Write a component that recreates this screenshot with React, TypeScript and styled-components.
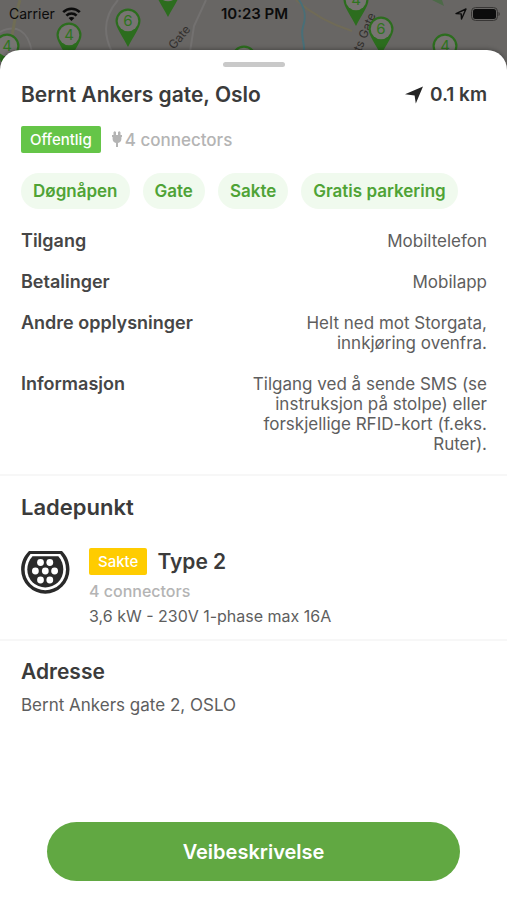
import React from "react";
import styled, { createGlobalStyle } from "styled-components";

const GlobalStyle = createGlobalStyle`
  * { box-sizing: border-box; }
  body {
    margin: 0;
    background: #ffffff;
    color: #3b3b3b;
    font-family: Inter, "Liberation Sans", sans-serif;
  }
  h1, h2, h3, p, dl, dt, dd, ul { margin: 0; padding: 0; }
`;

const Screen = styled.div`
  position: relative;
  display: flex;
  flex-direction: column;
  min-height: 100vh;
`;

const MapBackdrop = styled.svg`
  position: absolute;
  top: 0;
  left: 0;
  width: 100%;
  height: 76px;
  background: #686664;
`;

const StatusBar = styled.header`
  position: relative;
  display: grid;
  grid-template-columns: 1fr auto 1fr;
  align-items: center;
  height: 50px;
  padding: 4px 7px 26px 9px;
  color: #0c0c0c;
  font-size: 14px;
  line-height: 20px;
`;

const StatusGroup = styled.div<{ $end?: boolean }>`
  display: flex;
  align-items: center;
  gap: ${(p) => (p.$end ? "4px" : "7px")};
  justify-content: ${(p) => (p.$end ? "flex-end" : "flex-start")};
`;

const Clock = styled.time`
  font-size: 15px;
  font-weight: 600;
`;

const Sheet = styled.main`
  position: relative;
  flex: 1;
  display: flex;
  flex-direction: column;
  background: #ffffff;
  border-radius: 20px 20px 0 0;
  box-shadow: 0 -1px 4px rgba(0, 0, 0, 0.3);
`;

const Handle = styled.div`
  align-self: center;
  width: 62px;
  height: 5px;
  margin-top: 12px;
  border-radius: 3px;
  background: #c9c9c9;
`;

const Section = styled.section<{ $divided?: boolean }>`
  padding: 0 20px 0 21px;
  border-top: ${(p) => (p.$divided ? "2px solid #f7f7f7" : "none")};
`;

const TitleRow = styled.div`
  display: flex;
  align-items: center;
  justify-content: space-between;
  padding-top: 15px;
`;

const Title = styled.h1`
  font-size: 21px;
  line-height: 26px;
  font-weight: 600;
`;

const Distance = styled.span`
  display: flex;
  align-items: center;
  gap: 7px;
  font-size: 19px;
  line-height: 24px;
  font-weight: 600;
`;

const MetaRow = styled.div`
  display: flex;
  align-items: center;
  gap: 11px;
  margin-top: 18px;
`;

const Badge = styled.span<{ $color: string }>`
  padding: 0 9px;
  border-radius: 2px;
  background: ${(p) => p.$color};
  color: #ffffff;
  font-size: 15px;
  line-height: 27px;
  font-weight: 500;
`;

const Connectors = styled.p`
  display: flex;
  align-items: center;
  gap: 3px;
  color: #b4b4b4;
  font-size: 17px;
  line-height: 22px;
  font-weight: 500;
`;

const ChipList = styled.ul`
  display: flex;
  flex-wrap: wrap;
  gap: 13px;
  margin-top: 20px;
  list-style: none;
`;

const Chip = styled.li`
  padding: 0 12px;
  border-radius: 18px;
  background: #f0faee;
  color: #4fa336;
  font-size: 17px;
  line-height: 36px;
  font-weight: 600;
`;

const Facts = styled.dl`
  display: flex;
  flex-direction: column;
  gap: 21px;
  padding: 22px 0 20px;
`;

const Fact = styled.div`
  display: flex;
  justify-content: space-between;
  gap: 32px;
  line-height: 20px;
`;

const FactName = styled.dt`
  flex: none;
  color: #464646;
  font-size: 18px;
  font-weight: 600;
`;

const FactValue = styled.dd`
  max-width: 244px;
  color: #5e5e5e;
  font-size: 17px;
  text-align: right;
`;

const Heading = styled.h2<{ $minor?: boolean }>`
  font-size: ${(p) => (p.$minor ? "21px" : "22px")};
  line-height: 26px;
  font-weight: 600;
  padding-top: 18px;
`;

const Outlet = styled.div`
  display: flex;
  align-items: flex-start;
  gap: 19px;
  padding: 28px 0 12px;
`;

const OutletArt = styled.svg`
  flex: none;
  width: 49px;
  height: 43px;
  margin-top: 3px;
`;

const OutletInfo = styled.div`
  display: flex;
  flex-direction: column;
`;

const OutletTitle = styled.div`
  display: flex;
  align-items: center;
  gap: 10px;
  margin-bottom: 5px;
`;

const OutletName = styled.h3`
  font-size: 21px;
  line-height: 26px;
  font-weight: 600;
`;

const Muted = styled.p`
  color: #b4b4b4;
  font-size: 16px;
  line-height: 22px;
  font-weight: 500;
`;

const Detail = styled.p`
  margin-top: 3px;
  color: #5e5e5e;
  font-size: 16px;
  line-height: 22px;
`;

const Address = styled.p`
  margin-top: 9px;
  color: #5e5e5e;
  font-size: 17px;
  line-height: 22px;
`;

const Footer = styled.footer`
  display: flex;
  margin-top: auto;
  padding: 24px 47px 19px;
`;

const DirectionsButton = styled.button`
  flex: 1;
  height: 59px;
  border: 0;
  border-radius: 30px;
  background: #61a842;
  color: #ffffff;
  font-family: inherit;
  font-size: 20px;
  font-weight: 600;
  cursor: pointer;
`;

type PinProps = { x: number; y: number; label?: string };

const Pin = ({ x, y, label }: PinProps) => (
  <g transform={`translate(${x} ${y})`}>
    <path d="M-12.5 0 A12.5 12.5 0 1 1 12.5 0 C12.5 6 5 16 0 26 C-5 16 -12.5 6 -12.5 0Z" fill="#2c6d1e" />
    <circle r="10.3" fill="#777472" />
    {label && (
      <text y="5" textAnchor="middle" fontSize="15" fill="#2f7420">
        {label}
      </text>
    )}
  </g>
);

const CityMap = () => (
  <MapBackdrop viewBox="0 0 507 76" preserveAspectRatio="xMidYMin slice" aria-hidden="true">
    <g fill="none" stroke="#737170" strokeWidth="2">
      <path d="M118 0 C102 18 104 36 112 52" />
      <path d="M206 0 L194 26 L190 52" />
      <path d="M0 32 C16 24 28 30 32 52" />
    </g>
    <path d="M20 0 C14 18 12 34 10 52" fill="none" stroke="#706d55" strokeWidth="3" />
    <path d="M296 0 C312 14 330 24 352 31" fill="none" stroke="#706b57" strokeWidth="2" />
    <path d="M299 0 C306 10 306 18 303 27 C300 36 305 42 304 52" fill="none" stroke="#486f78" strokeWidth="2" />
    <path d="M432 0 L444 6 L442 0Z" fill="#4d6a48" />
    <g fill="#33302e" fontSize="12">
      <text transform="translate(174 50) rotate(-50)">Gate</text>
      <text transform="translate(361 52) rotate(-68)">ts Gate</text>
    </g>
    <Pin x={7} y={46} label="4" />
    <Pin x={69} y={35} label="4" />
    <Pin x={128} y={21} label="6" />
    <Pin x={168} y={-9} />
    <Pin x={244} y={58} />
    <Pin x={356} y={0} label="4" />
    <Pin x={381} y={29} label="6" />
    <Pin x={445} y={46} label="4" />
  </MapBackdrop>
);

const WifiIcon = () => (
  <svg width="19" height="14" viewBox="0 0 19 14" aria-hidden="true">
    <g fill="none" stroke="#0c0c0c" strokeWidth="2.6">
      <path d="M1.2 5.2 C5.8 0.6 13.2 0.6 17.8 5.2" />
      <path d="M4.4 8.6 C7.2 5.8 11.8 5.8 14.6 8.6" />
    </g>
    <path d="M9.5 14 L6.6 11 C8.2 9.6 10.8 9.6 12.4 11Z" fill="#0c0c0c" />
  </svg>
);

const LocationIcon = () => (
  <svg width="12" height="12" viewBox="0 0 12 12" aria-hidden="true">
    <path d="M1 5.6 L11 1 L6.5 11 L6.2 5.9Z" fill="none" stroke="#0c0c0c" strokeWidth="1.4" strokeLinejoin="round" />
  </svg>
);

const BatteryIcon = () => (
  <svg width="29" height="14" viewBox="0 0 29 14" aria-hidden="true">
    <rect x="0.5" y="0.5" width="26" height="13" rx="4" fill="none" stroke="#383635" />
    <rect x="2" y="2" width="23" height="10" rx="2.5" fill="#0c0c0c" />
    <path d="M27.5 5 C29.2 5.6 29.2 8.4 27.5 9Z" fill="#383635" />
  </svg>
);

const ArrowIcon = () => (
  <svg width="18" height="18" viewBox="0 0 18 18" aria-hidden="true">
    <path d="M0 8.3 L18 0.5 L10.8 17.5 L9.6 9.6Z" fill="#232323" />
  </svg>
);

const PlugIcon = () => (
  <svg width="10" height="17" viewBox="0 0 10 17" aria-hidden="true">
    <path
      d="M1.5 1.2 Q2.8 -0.6 4 1.2 V4 H6 V1.2 Q7.2 -0.6 8.5 1.2 V4 H10 V6 H9.4 V8 C9.4 10.2 7.8 11.6 6 11.9 V16 H4 V11.9 C2.2 11.6 0.6 10.2 0.6 8 V6 H0 V4 H1.5Z"
      fill="#b4b4b4"
    />
  </svg>
);

const holes = [
  [19.5, 11.5], [28.8, 11.5],
  [14.4, 20], [24.3, 20], [33.6, 20],
  [19.5, 29], [28.8, 29],
];

const Type2Icon = () => (
  <OutletArt viewBox="0 0 49 43" aria-hidden="true">
    <path d="M8 0 H41 C46 5 48.5 11 48.5 18.5 A24.2 24.2 0 0 1 0.1 18.5 C0.1 11 3 5 8 0Z" fill="#2a2a2a" />
    <path d="M9.5 3 H39.3 C43 7.5 45 12.8 45 18.5 A20.7 20.7 0 0 1 3.6 18.5 C3.6 12.8 5.8 7.5 9.5 3Z" fill="#ffffff" />
    <path d="M11.5 5.2 H37.3 C40.8 9 42.3 13.6 42.3 18.5 A18 18 0 0 1 6.3 18.5 C6.3 13.6 8 9 11.5 5.2Z" fill="#2a2a2a" />
    {holes.map(([cx, cy]) => (
      <circle key={`${cx}-${cy}`} cx={cx} cy={cy} r="3.4" fill="#ffffff" />
    ))}
  </OutletArt>
);

const tags = ["Døgnåpen", "Gate", "Sakte", "Gratis parkering"];

const facts = [
  { name: "Tilgang", value: "Mobiltelefon" },
  { name: "Betalinger", value: "Mobilapp" },
  { name: "Andre opplysninger", value: "Helt ned mot Storgata, innkjøring ovenfra." },
  {
    name: "Informasjon",
    value: "Tilgang ved å sende SMS (se instruksjon på stolpe) eller forskjellige RFID-kort (f.eks. Ruter).",
  },
];

export default function App() {
  return (
    <Screen>
      <GlobalStyle />
      <CityMap />
      <StatusBar>
        <StatusGroup>
          Carrier
          <WifiIcon />
        </StatusGroup>
        <Clock>10:23 PM</Clock>
        <StatusGroup $end>
          <LocationIcon />
          <BatteryIcon />
        </StatusGroup>
      </StatusBar>
      <Sheet>
        <Handle />
        <Section>
          <TitleRow>
            <Title>Bernt Ankers gate, Oslo</Title>
            <Distance>
              <ArrowIcon />
              0.1 km
            </Distance>
          </TitleRow>
          <MetaRow>
            <Badge $color="#65c548">Offentlig</Badge>
            <Connectors>
              <PlugIcon />4 connectors
            </Connectors>
          </MetaRow>
          <ChipList>
            {tags.map((tag) => (
              <Chip key={tag}>{tag}</Chip>
            ))}
          </ChipList>
          <Facts>
            {facts.map((fact) => (
              <Fact key={fact.name}>
                <FactName>{fact.name}</FactName>
                <FactValue>{fact.value}</FactValue>
              </Fact>
            ))}
          </Facts>
        </Section>
        <Section $divided>
          <Heading>Ladepunkt</Heading>
          <Outlet>
            <Type2Icon />
            <OutletInfo>
              <OutletTitle>
                <Badge $color="#ffcc00">Sakte</Badge>
                <OutletName>Type 2</OutletName>
              </OutletTitle>
              <Muted>4 connectors</Muted>
              <Detail>3,6 kW - 230V 1-phase max 16A</Detail>
            </OutletInfo>
          </Outlet>
        </Section>
        <Section $divided>
          <Heading $minor>Adresse</Heading>
          <Address>Bernt Ankers gate 2, OSLO</Address>
        </Section>
        <Footer>
          <DirectionsButton type="button">Veibeskrivelse</DirectionsButton>
        </Footer>
      </Sheet>
    </Screen>
  );
}
